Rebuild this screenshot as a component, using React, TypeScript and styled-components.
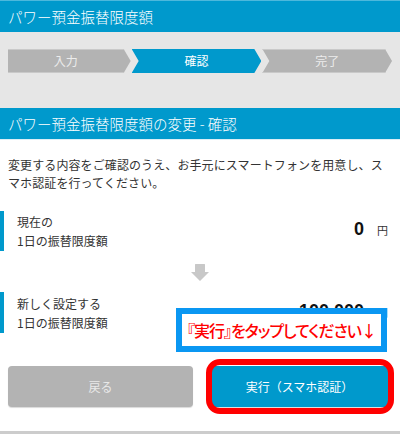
import React from "react";
import styled, { createGlobalStyle } from "styled-components";

const GlobalStyle = createGlobalStyle`
  html, body {
    margin: 0;
    padding: 0;
    background: #ffffff;
  }
  body {
    font-family: "Noto Sans CJK JP", "Noto Sans", sans-serif;
    color: #333333;
  }
  * { box-sizing: border-box; }
`;

const BLUE = "#0099cc";
const GRAY = "#b3b3b3";

const Page = styled.div`
  width: 400px;
  height: 434px;
  overflow: hidden;
  background: #ffffff;
  display: flex;
  flex-direction: column;
`;

const TitleBar = styled.h1`
  margin: 0;
  height: 32px;
  border-top: 1px solid #4db8dc;
  background: ${BLUE};
  color: #ffffff;
  font-size: 14.5px;
  font-weight: 300;
  line-height: 31px;
  padding: 0 8px;
`;

const StepsArea = styled.div`
  height: 76px;
  background: #e6e6e6;
  padding: 17px 8px 0;
`;

const Steps = styled.ol`
  list-style: none;
  margin: 0;
  padding: 0;
  display: flex;
  gap: 1px;
  height: 24px;
`;

const Step = styled.li<{ $active?: boolean; $first?: boolean }>`
  flex: 1;
  display: flex;
  align-items: center;
  justify-content: center;
  padding-left: ${(p) => (p.$first ? "0" : "7px")};
  padding-right: 7px;
  background: ${(p) => (p.$active ? BLUE : GRAY)};
  color: ${(p) => (p.$active ? "#ffffff" : "#ececec")};
  box-shadow: ${(p) =>
    p.$active ? "none" : "inset 0 1px 0 #c9c9c9, inset 0 -1px 0 #c9c9c9"};
  font-size: 12px;
  line-height: 24px;
  clip-path: ${(p) =>
    p.$first
      ? "polygon(0 0, calc(100% - 7px) 0, 100% 50%, calc(100% - 7px) 100%, 0 100%)"
      : "polygon(0 0, calc(100% - 7px) 0, 100% 50%, calc(100% - 7px) 100%, 0 100%, 7px 50%)"};
`;

const SectionBar = styled.h2`
  margin: 0;
  height: 32px;
  background: ${BLUE};
  border-bottom: 1px solid #dbeef6;
  color: #ffffff;
  font-size: 14.5px;
  font-weight: 300;
  line-height: 31px;
  padding: 0 8px;
`;

const Content = styled.main`
  padding: 16px 0 24px;
  display: flex;
  flex-direction: column;
`;

const Lead = styled.p`
  margin: 0;
  padding: 0 8px;
  font-size: 12px;
  line-height: 18px;
  letter-spacing: 0.1px;
  color: #333333;
`;

const LimitRow = styled.div<{ $top: number; $height: number }>`
  position: relative;
  margin-top: ${(p) => p.$top}px;
  height: ${(p) => p.$height}px;
  border-left: 4px solid ${BLUE};
  padding: 0 12px 0 13px;
  display: flex;
  align-items: center;
  justify-content: space-between;
`;

const LimitLabel = styled.div`
  font-size: 12px;
  line-height: 19px;
  color: #333333;
`;

const Amount = styled.div`
  display: flex;
  align-items: baseline;
  margin-top: -3px;
`;

const AmountNumber = styled.span`
  font-family: "Liberation Sans", Arial, sans-serif;
  font-weight: 700;
  font-size: 18px;
  color: #111111;
  margin-right: 13px;
`;

const Yen = styled.span`
  font-size: 11px;
  color: #333333;
`;

const DownArrow = styled.div`
  margin-top: 13px;
  margin-bottom: 11px;
  height: 17px;
  display: flex;
  justify-content: center;
`;

const Callout = styled.div`
  position: absolute;
  top: 16px;
  left: 172px;
  width: 211px;
  height: 44px;
  border: 6px solid #0a97f2;
  background: #ffffff;
  display: flex;
  align-items: center;
  justify-content: center;
  color: #ff0000;
  font-size: 16px;
  font-weight: 500;
  letter-spacing: -1px;
  font-feature-settings: "palt";
  white-space: nowrap;
`;

const ButtonRow = styled.div`
  margin-top: 33px;
  padding: 0 8px;
  display: flex;
  gap: 14px;
`;

const Button = styled.button<{ $primary?: boolean }>`
  flex: 1;
  height: 41px;
  border: none;
  border-radius: ${(p) => (p.$primary ? "5px" : "4px")};
  background: ${(p) => (p.$primary ? BLUE : GRAY)};
  color: ${(p) => (p.$primary ? "#ffffff" : "#e9e9e9")};
  box-shadow: 0 1px 1px rgba(0, 0, 0, 0.15);
  font-family: "Noto Sans CJK JP", sans-serif;
  font-size: 12px;
  padding: 0;
  cursor: pointer;
`;

const ExecWrap = styled.div`
  position: relative;
  flex: 1;
  display: flex;
`;

const Highlight = styled.span`
  position: absolute;
  left: -1px;
  right: -2px;
  top: -7px;
  bottom: -7px;
  border: 6px solid #ff0000;
  border-radius: 14px;
  pointer-events: none;
`;

const Footer = styled.footer`
  flex: 1;
  background: #cccccc;
  min-height: 3px;
`;

export default function App() {
  return (
    <>
      <GlobalStyle />
      <Page>
        <TitleBar>パワー預金振替限度額</TitleBar>
        <StepsArea>
          <Steps>
            <Step $first>入力</Step>
            <Step $active>確認</Step>
            <Step>完了</Step>
          </Steps>
        </StepsArea>
        <SectionBar>パワー預金振替限度額の変更 - 確認</SectionBar>
        <Content>
          <Lead>
            変更する内容をご確認のうえ、お手元にスマートフォンを用意し、スマホ認証を行ってください。
          </Lead>
          <LimitRow $top={19} $height={40}>
            <LimitLabel>
              現在の
              <br />
              1日の振替限度額
            </LimitLabel>
            <Amount>
              <AmountNumber>0</AmountNumber>
              <Yen>円</Yen>
            </Amount>
          </LimitRow>
          <DownArrow>
            <svg width="18" height="17" viewBox="0 0 18 17">
              <path d="M4 0.5 Q4 0 4.5 0 L13.5 0 Q14 0 14 0.5 L14 8 L18 8 L9 17 L0 8 L4 8 Z" fill="#c8c8c8" />
            </svg>
          </DownArrow>
          <LimitRow $top={0} $height={41}>
            <LimitLabel>
              新しく設定する
              <br />
              1日の振替限度額
            </LimitLabel>
            <Amount>
              <AmountNumber>100,000</AmountNumber>
              <Yen>円</Yen>
            </Amount>
            <Callout>『実行』をタップしてください↓</Callout>
          </LimitRow>
          <ButtonRow>
            <Button>戻る</Button>
            <ExecWrap>
              <Button $primary>実行（スマホ認証）</Button>
              <Highlight />
            </ExecWrap>
          </ButtonRow>
        </Content>
        <Footer />
      </Page>
    </>
  );
}
